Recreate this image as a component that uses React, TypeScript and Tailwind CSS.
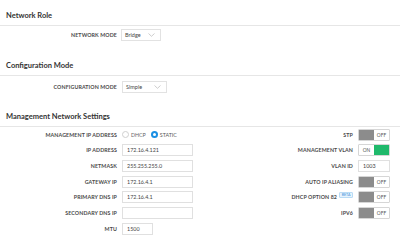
import React from "react";

const font = { fontFamily: "Lato, 'Open Sans', sans-serif" };

function SectionTitle({ children, top }: { children: React.ReactNode; top: string }) {
  return (
    <div className={`${top} border-b border-[#e6e6e6] pl-[6px] pb-[4px]`}>
      <div className="text-[7.5px] leading-[10px] font-bold text-[#333]">{children}</div>
    </div>
  );
}

function Chevron() {
  return (
    <svg width="7" height="4" viewBox="0 0 7 4" className="block">
      <path d="M0.5 0.5 L3.5 3.3 L6.5 0.5" fill="none" stroke="#b9b9b9" strokeWidth="0.7" />
    </svg>
  );
}

function Select({ value, width }: { value: string; width: string }) {
  return (
    <div className={`${width} h-[12px] border border-[#e2e2e2] bg-white flex items-center justify-between pl-[3px] pr-[5px]`}>
      <span className="text-[5.5px] leading-[6px] text-[#444]">{value}</span>
      <Chevron />
    </div>
  );
}

function Label({ children }: { children: React.ReactNode }) {
  return (
    <span className="text-[5.3px] leading-[6px] font-bold text-[#4a4a4a] tracking-[0.1px] whitespace-nowrap">
      {children}
    </span>
  );
}

function Input({ value, width = "w-[71px]" }: { value?: string; width?: string }) {
  return (
    <div className={`${width} h-[12px] border border-[#e0e0e0] bg-white flex items-center pl-[4px]`}>
      <span className="text-[5.4px] leading-[6px] text-[#444]">{value}</span>
    </div>
  );
}

function Toggle({ on }: { on?: boolean }) {
  return (
    <div className="w-[32px] h-[12px] border border-[#d6d6d6] rounded-[1px] flex bg-white overflow-hidden">
      {on ? (
        <>
          <div className="w-1/2 flex items-center justify-center text-[4.8px] leading-[6px] text-[#555]">ON</div>
          <div className="w-1/2 bg-[#1fb96b]" />
        </>
      ) : (
        <>
          <div className="w-1/2 bg-[#8c8c8c]" />
          <div className="w-1/2 flex items-center justify-center text-[4.8px] leading-[6px] text-[#555]">OFF</div>
        </>
      )}
    </div>
  );
}

function LeftRow({ label, children }: { label: string; children: React.ReactNode }) {
  return (
    <div className="h-[15.67px] flex items-center">
      <div className="w-[117px] flex justify-end">
        <Label>{label}</Label>
      </div>
      <div className="ml-[5px] flex">{children}</div>
    </div>
  );
}

function RightRow({ label, children, beta }: { label: string; children: React.ReactNode; beta?: boolean }) {
  return (
    <div className="h-[15.67px] flex items-center justify-end">
      <Label>{label}</Label>
      {beta && (
        <span className="ml-[2px] -mt-[4px] w-[14px] h-[6px] flex items-center justify-center text-[3.6px] leading-[4px] text-[#3b8fd8] bg-[#e6f3fd] border border-[#b9dbf5] rounded-[1px]">
          BETA
        </span>
      )}
      <div className="ml-[5px] flex">{children}</div>
    </div>
  );
}

export default function App() {
  return (
    <div className="w-[400px] h-[247px] bg-white overflow-hidden text-[6px] leading-[6px]" style={font}>
      <SectionTitle top="pt-[11px]">Network Role</SectionTitle>
      <div className="pt-[3px] flex items-center">
        <div className="w-[117px] flex justify-end">
          <Label>NETWORK MODE</Label>
        </div>
        <div className="ml-[4px] flex">
          <Select value="Bridge" width="w-[40px]" />
        </div>
      </div>

      <SectionTitle top="pt-[20px]">Configuration Mode</SectionTitle>
      <div className="pt-[5px] flex items-center">
        <div className="w-[117px] flex justify-end">
          <Label>CONFIGURATION MODE</Label>
        </div>
        <div className="ml-[5px] flex">
          <Select value="Simple" width="w-[45px]" />
        </div>
      </div>

      <SectionTitle top="pt-[19px]">Management Network Settings</SectionTitle>
      <div className="flex">
        <div className="w-[200px]">
          <LeftRow label="MANAGEMENT IP ADDRESS">
            <div className="flex items-center">
              <span className="w-[7px] h-[7px] rounded-full border border-[#cfcfcf] bg-white" />
              <span className="ml-[2px] text-[5.3px] text-[#666]">DHCP</span>
              <span className="ml-[5px] w-[7px] h-[7px] rounded-full bg-[#1a8fe3] flex items-center justify-center">
                <span className="w-[3px] h-[3px] rounded-full bg-white" />
              </span>
              <span className="ml-[2px] text-[5.3px] text-[#555]">STATIC</span>
            </div>
          </LeftRow>
          <LeftRow label="IP ADDRESS">
            <Input value="172.16.4.121" />
          </LeftRow>
          <LeftRow label="NETMASK">
            <Input value="255.255.255.0" />
          </LeftRow>
          <LeftRow label="GATEWAY IP">
            <Input value="172.16.4.1" />
          </LeftRow>
          <LeftRow label="PRIMARY DNS IP">
            <Input value="172.16.4.1" />
          </LeftRow>
          <LeftRow label="SECONDARY DNS IP">
            <Input />
          </LeftRow>
          <LeftRow label="MTU">
            <Input value="1500" width="w-[31px]" />
          </LeftRow>
        </div>
        <div className="flex-1 pr-[10px]">
          <RightRow label="STP">
            <Toggle />
          </RightRow>
          <RightRow label="MANAGEMENT VLAN">
            <Toggle on />
          </RightRow>
          <RightRow label="VLAN ID">
            <Input value="1003" width="w-[32px]" />
          </RightRow>
          <RightRow label="AUTO IP ALIASING">
            <Toggle />
          </RightRow>
          <RightRow label="DHCP OPTION 82" beta>
            <Toggle />
          </RightRow>
          <RightRow label="IPV6">
            <Toggle />
          </RightRow>
        </div>
      </div>
    </div>
  );
}
